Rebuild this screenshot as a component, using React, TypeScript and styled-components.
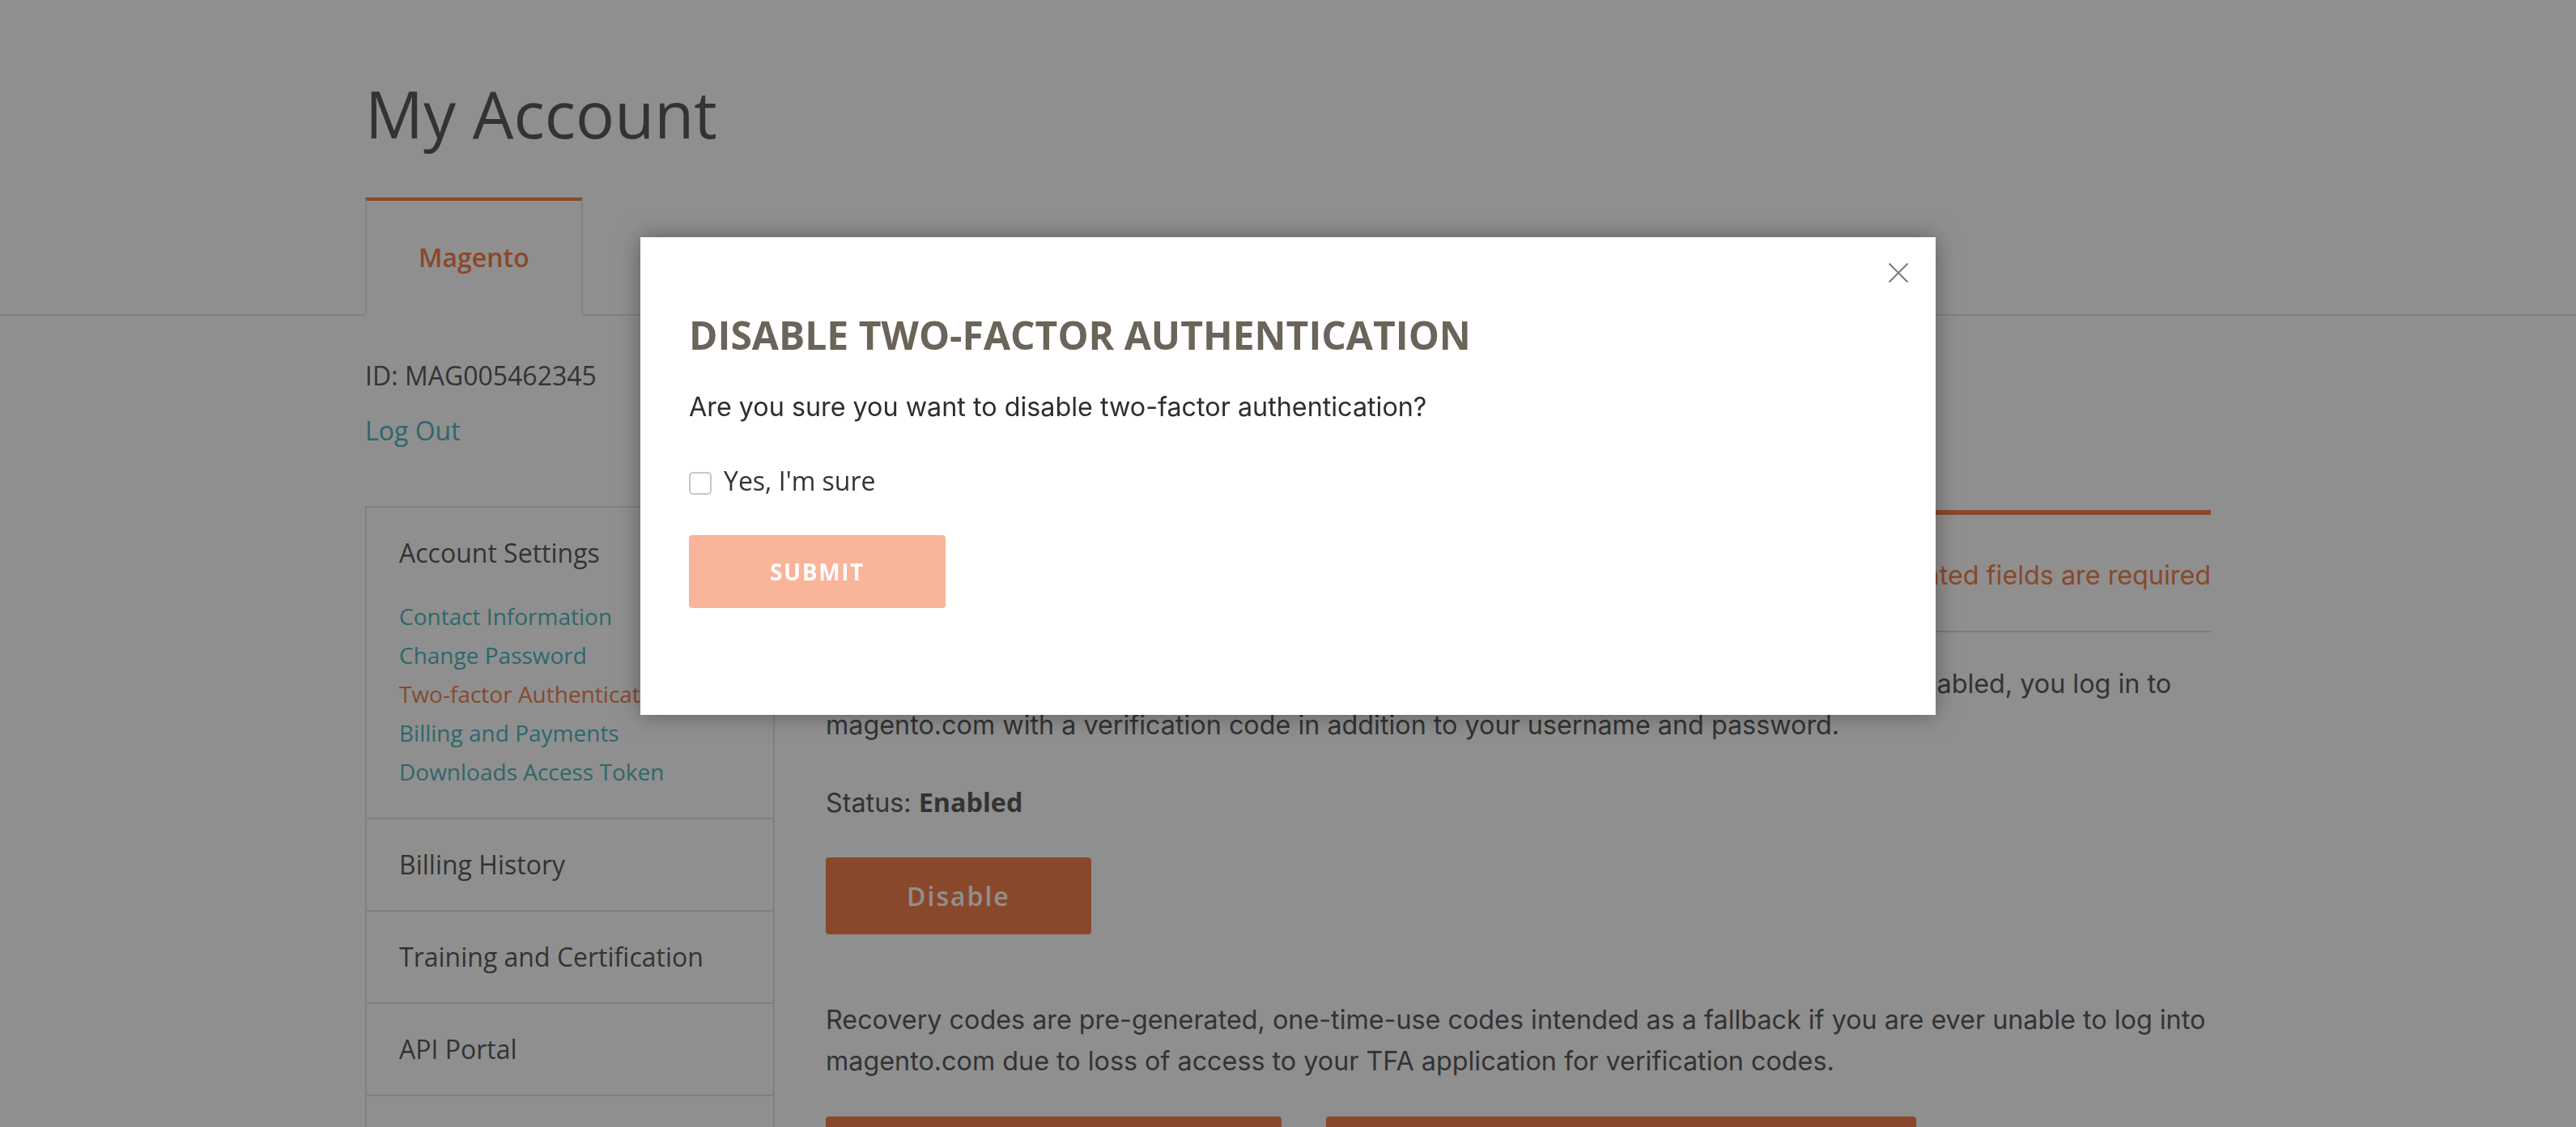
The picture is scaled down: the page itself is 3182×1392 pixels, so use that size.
import React from "react";
import styled, { createGlobalStyle } from "styled-components";

const ORANGE = "#f26322";
const TEAL = "#26a8ad";
const TEXT = "#333333";
const BORDER = "#dcdcdc";
const BODY_FONT = `Inter, "Noto Sans", "Liberation Sans", sans-serif`;
const HEAD_FONT = `"Open Sans", "Liberation Sans", Arial, sans-serif`;

const GlobalStyle = createGlobalStyle`
  *, *::before, *::after { box-sizing: border-box; }
  html, body { margin: 0; padding: 0; background: #ffffff; }
  body {
    font-family: ${HEAD_FONT};
    color: ${TEXT};
    overflow: hidden;
  }
`;

const Page = styled.div`
  min-height: 1392px;
  background: #ffffff;
`;

const Container = styled.div`
  width: 2280px;
  margin: 0 auto;
`;

const PageTitle = styled.h1`
  margin: 0;
  padding-top: 92px;
  font-size: 80px;
  line-height: 96px;
  font-weight: 400;
  color: ${TEXT};
`;

const TabBar = styled.div`
  margin-top: 56px;
  border-bottom: 2px solid #dedede;
`;

const TabList = styled.div`
  display: flex;
`;

const Tab = styled.div<{ $active?: boolean }>`
  padding: 48px 64px;
  margin-bottom: -2px;
  border: 2px solid ${(p) => (p.$active ? "#e2e2e2" : "transparent")};
  border-top: 4px solid ${(p) => (p.$active ? ORANGE : "transparent")};
  border-bottom: 2px solid #ffffff;
  background: #ffffff;
  font-size: 32px;
  line-height: 44px;
  font-weight: 600;
  color: ${(p) => (p.$active ? ORANGE : TEXT)};
`;

const AccountMeta = styled.div`
  padding-top: 50px;
  display: flex;
  flex-direction: column;
  gap: 20px;
  font-size: 32px;
  line-height: 48px;
`;

const AccountId = styled.div`
  color: ${TEXT};
`;

const TextLink = styled.a`
  color: ${TEAL};
  text-decoration: none;
`;

const Layout = styled.div`
  margin-top: 69px;
  display: grid;
  grid-template-columns: 506px 1fr;
  column-gap: 63px;
  align-items: start;
`;

const Sidebar = styled.nav`
  border: 2px solid ${BORDER};
  border-bottom: none;
`;

const NavSection = styled.div<{ $extra?: number }>`
  padding: 32px 40px ${(p) => 32 + (p.$extra ?? 0)}px;
  border-bottom: 2px solid ${BORDER};
`;

const NavHeading = styled.div`
  font-size: 32px;
  line-height: 48px;
  color: ${TEXT};
`;

const NavLinks = styled.ul`
  list-style: none;
  margin: 30px 0 0;
  padding: 0;
`;

const NavItem = styled.li<{ $active?: boolean }>`
  font-size: 28px;
  line-height: 48px;
  white-space: nowrap;
  color: ${(p) => (p.$active ? ORANGE : TEAL)};
`;

const Main = styled.section`
  margin-top: 5px;
  border-top: 6px solid ${ORANGE};
  font-family: ${BODY_FONT};
  font-size: 32.3px;
  line-height: 51px;
  color: ${TEXT};
`;

const RequiredNote = styled.p`
  margin: 0;
  padding: 49px 0 43px;
  text-align: right;
  color: ${ORANGE};
  border-bottom: 2px solid #d1d1d1;
`;

const Paragraph = styled.p<{ $gap: number }>`
  margin: ${(p) => p.$gap}px 0 0;
  white-space: nowrap;
`;

const Strong = styled.strong`
  font-family: ${HEAD_FONT};
  font-weight: 700;
`;

const PrimaryButton = styled.button<{ $gap?: number; $width?: number }>`
  display: inline-flex;
  align-items: center;
  justify-content: center;
  margin-top: ${(p) => p.$gap ?? 0}px;
  height: 95px;
  width: ${(p) => (p.$width ? `${p.$width}px` : "auto")};
  padding: 0 100px;
  border: none;
  border-radius: 4px;
  background: ${ORANGE};
  color: #ffffff;
  font-family: ${HEAD_FONT};
  font-size: 32px;
  font-weight: 600;
  letter-spacing: 2px;
  white-space: nowrap;
`;

const ButtonRow = styled.div`
  margin-top: 43px;
  display: flex;
  gap: 55px;
`;

/* ---------- Modal ---------- */

const Overlay = styled.div`
  position: fixed;
  inset: 0;
  background: rgba(51, 51, 51, 0.55);
  display: flex;
  justify-content: center;
  align-items: flex-start;
  padding-top: 293px;
`;

const Modal = styled.div`
  position: relative;
  width: 1600px;
  background: #ffffff;
  box-shadow: 0 0 28px rgba(0, 0, 0, 0.35);
  padding: 92px 60px 132px;
`;

const CloseButton = styled.button`
  position: absolute;
  top: 31px;
  right: 33px;
  width: 26px;
  height: 26px;
  padding: 0;
  border: none;
  background: transparent;
  display: flex;
  align-items: center;
  justify-content: center;
`;

const ModalTitle = styled.h2`
  margin: 0;
  font-family: ${HEAD_FONT};
  font-size: 48px;
  line-height: 57.6px;
  font-weight: 700;
  text-transform: uppercase;
  color: #6b6459;
`;

const ModalText = styled.p`
  margin: 34px 0 0;
  font-family: ${BODY_FONT};
  font-size: 32.3px;
  line-height: 51px;
  color: #2e2e2e;
`;

const CheckRow = styled.label`
  margin-top: 42px;
  display: flex;
  align-items: center;
  gap: 15px;
  font-family: ${HEAD_FONT};
  font-size: 32px;
  line-height: 48px;
  color: ${TEXT};
`;

const CheckBox = styled.input`
  appearance: none;
  margin: 6px 0 0;
  width: 28px;
  height: 28px;
  border: 2px solid #c6c6c6;
  border-radius: 5px;
  background: #ffffff;
`;

const SubmitButton = styled.button`
  margin-top: 43px;
  height: 90px;
  padding: 0 100px;
  border: none;
  border-radius: 4px;
  background: #fab49a;
  color: #ffffff;
  font-family: ${HEAD_FONT};
  font-size: 28px;
  font-weight: 700;
  letter-spacing: 1.6px;
  text-transform: uppercase;
`;

const CloseIcon = () => (
  <svg width="26" height="26" viewBox="0 0 26 26" aria-hidden="true">
    <path d="M1.5 1.5 L24.5 24.5 M24.5 1.5 L1.5 24.5" stroke="#7a7a7a" strokeWidth="2" fill="none" />
  </svg>
);

const accountLinks = [
  { label: "Contact Information" },
  { label: "Change Password" },
  { label: "Two-factor Authentication", active: true },
  { label: "Billing and Payments" },
  { label: "Downloads Access Token" },
];

const otherSections = ["Billing History", "Training and Certification", "API Portal", "Partner Portal"];

export default function App() {
  return (
    <>
      <GlobalStyle />
      <Page>
        <Container>
          <PageTitle>My Account</PageTitle>
        </Container>
        <TabBar>
          <Container>
            <TabList>
              <Tab $active>Magento</Tab>
            </TabList>
          </Container>
        </TabBar>
        <Container>
          <AccountMeta>
            <AccountId>ID: MAG005462345</AccountId>
            <div>
              <TextLink href="#">Log Out</TextLink>
            </div>
          </AccountMeta>
          <Layout>
            <Sidebar>
              <NavSection $extra={1}>
                <NavHeading>Account Settings</NavHeading>
                <NavLinks>
                  {accountLinks.map((l) => (
                    <NavItem key={l.label} $active={l.active}>
                      {l.label}
                    </NavItem>
                  ))}
                </NavLinks>
              </NavSection>
              {otherSections.map((s) => (
                <NavSection key={s}>
                  <NavHeading>{s}</NavHeading>
                </NavSection>
              ))}
            </Sidebar>
            <Main>
              <RequiredNote>Highlighted fields are required</RequiredNote>
              <Paragraph $gap={38}>
                Two-factor authentication (TFA) offers a layer of security to your account. When TFA is enabled, you log in to
                <br />
                magento.com with a verification code in addition to your username and password.
              </Paragraph>
              <Paragraph $gap={44}>
                Status: <Strong>Enabled</Strong>
              </Paragraph>
              <PrimaryButton $gap={42}>Disable</PrimaryButton>
              <Paragraph $gap={80}>
                Recovery codes are pre-generated, one-time-use codes intended as a fallback if you are ever unable to log into
                <br />
                magento.com due to loss of access to your TFA application for verification codes.
              </Paragraph>
              <ButtonRow>
                <PrimaryButton $width={563}>View Recovery Codes</PrimaryButton>
                <PrimaryButton $width={729}>Generate New Recovery Codes</PrimaryButton>
              </ButtonRow>
            </Main>
          </Layout>
        </Container>
      </Page>
      <Overlay>
        <Modal role="dialog" aria-modal="true">
          <CloseButton aria-label="Close">
            <CloseIcon />
          </CloseButton>
          <ModalTitle>Disable Two-Factor Authentication</ModalTitle>
          <ModalText>Are you sure you want to disable two-factor authentication?</ModalText>
          <CheckRow>
            <CheckBox type="checkbox" />
            Yes, I'm sure
          </CheckRow>
          <SubmitButton type="button">Submit</SubmitButton>
        </Modal>
      </Overlay>
    </>
  );
}
